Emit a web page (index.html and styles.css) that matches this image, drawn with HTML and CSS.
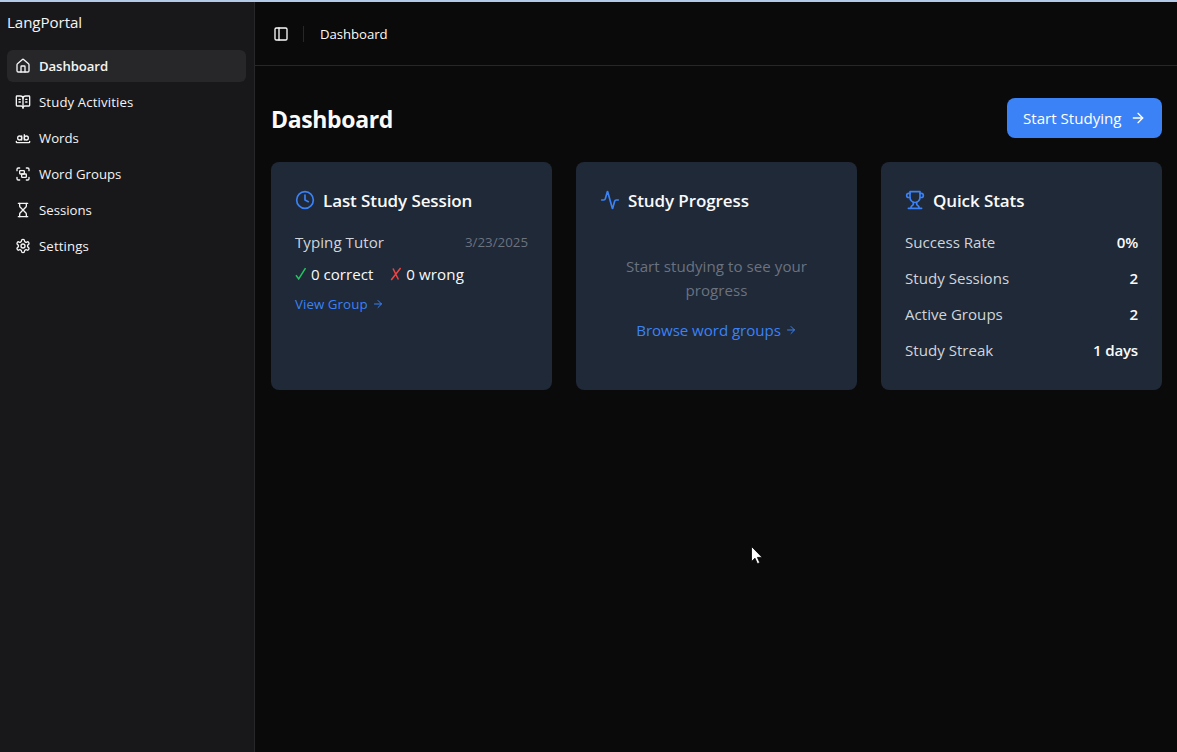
FILE: index.html
```html
<!DOCTYPE html>
<html lang="en">
<head>
<meta charset="utf-8">
<title>LangPortal</title>
<link rel="stylesheet" href="styles.css">
</head>
<body>
<div class="app">
  <aside class="sidebar">
    <div class="brand"><span class="t-brand">LangPortal</span></div>
    <nav class="nav">
      <a class="nav-item active"><svg class="icon" viewBox="0 0 24 24"><path d="M15 21v-8a1 1 0 0 0-1-1h-4a1 1 0 0 0-1 1v8"/><path d="M3 10a2 2 0 0 1 .709-1.528l7-5.999a2 2 0 0 1 2.582 0l7 5.999A2 2 0 0 1 21 10v9a2 2 0 0 1-2 2H5a2 2 0 0 1-2-2z"/></svg><span class="t-dash">Dashboard</span></a>
      <a class="nav-item"><svg class="icon" viewBox="0 0 24 24"><path d="M12 7v14"/><path d="M16 12h2"/><path d="M16 8h2"/><path d="M3 18a1 1 0 0 1-1-1V4a1 1 0 0 1 1-1h5a4 4 0 0 1 4 4 4 4 0 0 1 4-4h5a1 1 0 0 1 1 1v13a1 1 0 0 1-1 1h-6a3 3 0 0 0-3 3 3 3 0 0 0-3-3z"/><path d="M6 12h2"/><path d="M6 8h2"/></svg><span class="t-act">Study Activities</span></a>
      <a class="nav-item"><svg class="icon" viewBox="0 0 24 24"><circle cx="7" cy="12" r="3"/><path d="M10 9v6"/><circle cx="17" cy="12" r="3"/><path d="M14 7v8"/><path d="M22 17v1c0 .5-.5 1-1 1H3c-.5 0-1-.5-1-1v-1"/></svg><span class="t-words">Words</span></a>
      <a class="nav-item"><svg class="icon" viewBox="0 0 24 24"><path d="M3 7V5c0-1.100.9-2 2-2h2"/><path d="M17 3h2c1.100 0 2 .9 2 2v2"/><path d="M21 17v2c0 1.100-.9 2-2 2h-2"/><path d="M7 21H5c-1.100 0-2-.9-2-2v-2"/><rect width="7" height="5" x="7" y="7" rx="1"/><rect width="7" height="5" x="10" y="12" rx="1"/></svg><span class="t-groups">Word Groups</span></a>
      <a class="nav-item"><svg class="icon" viewBox="0 0 24 24"><path d="M5 22h14"/><path d="M5 2h14"/><path d="M17 22v-4.172a2 2 0 0 0-.586-1.414L12 12l-4.414 4.414A2 2 0 0 0 7 17.828V22"/><path d="M7 2v4.172a2 2 0 0 0 .586 1.414L12 12l4.414-4.414A2 2 0 0 0 17 6.172V2"/></svg><span class="t-sess">Sessions</span></a>
      <a class="nav-item"><svg class="icon" viewBox="0 0 24 24"><path d="M12.220 2h-.44a2 2 0 0 0-2 2v.18a2 2 0 0 1-1 1.730l-.43.25a2 2 0 0 1-2 0l-.15-.08a2 2 0 0 0-2.730.73l-.22.38a2 2 0 0 0 .73 2.730l.15.1a2 2 0 0 1 1 1.720v.51a2 2 0 0 1-1 1.740l-.15.09a2 2 0 0 0-.73 2.730l.22.38a2 2 0 0 0 2.730.73l.15-.08a2 2 0 0 1 2 0l.43.25a2 2 0 0 1 1 1.730V20a2 2 0 0 0 2 2h.44a2 2 0 0 0 2-2v-.18a2 2 0 0 1 1-1.730l.43-.25a2 2 0 0 1 2 0l.15.08a2 2 0 0 0 2.730-.73l.22-.39a2 2 0 0 0-.73-2.730l-.15-.08a2 2 0 0 1-1-1.740v-.5a2 2 0 0 1 1-1.740l.15-.09a2 2 0 0 0 .73-2.730l-.22-.38a2 2 0 0 0-2.730-.73l-.15.08a2 2 0 0 1-2 0l-.43-.25a2 2 0 0 1-1-1.730V4a2 2 0 0 0-2-2z"/><circle cx="12" cy="12" r="3"/></svg><span class="t-set">Settings</span></a>
    </nav>
  </aside>
  <div class="content">
    <header class="topbar">
      <svg class="icon" viewBox="0 0 24 24"><rect width="18" height="18" x="3" y="3" rx="2"/><path d="M9 3v18"/></svg>
      <span class="divider"></span>
      <span class="crumb">Dashboard</span>
    </header>
    <main class="main">
      <div class="heading">
        <h1>Dashboard</h1>
        <a class="button"><span class="t-start">Start Studying</span><svg class="icon" viewBox="0 0 24 24"><path d="M5 12h14"/><path d="m12 5 7 7-7 7"/></svg></a>
      </div>
      <div class="cards">
        <section class="card">
          <h2><svg class="icon" viewBox="0 0 24 24"><circle cx="12" cy="12" r="10"/><path d="M12 6v6l4 2"/></svg><span class="t-last">Last Study Session</span></h2>
          <div class="row"><span class="label t-typing">Typing Tutor</span><span class="date">3/23/2025</span></div>
          <div class="results">
            <span class="result"><svg class="mark good" viewBox="0 0 12 16"><path d="M1 9.200 3.700 13 10.500 2.200"/></svg><span class="t-correct">0 correct</span></span>
            <span class="result"><svg class="mark bad" viewBox="0 0 12 16"><path d="M3 2.500 8.400 13.500M10.600 2 1.200 14"/></svg><span class="t-wrong">0 wrong</span></span>
          </div>
          <a class="link small"><span class="t-view">View Group</span><svg class="icon" viewBox="0 0 24 24"><path d="M5 12h14"/><path d="m12 5 7 7-7 7"/></svg></a>
        </section>
        <section class="card">
          <h2><svg class="icon" viewBox="0 0 24 24"><path d="M22 12h-2.480a2 2 0 0 0-1.930 1.460l-2.350 8.360a.25.25 0 0 1-.48 0L9.240 2.180a.25.25 0 0 0-.48 0l-2.350 8.360A2 2 0 0 1 4.490 12H2"/></svg><span class="t-prog">Study Progress</span></h2>
          <div class="empty">
            <p>Start studying to see your<br>progress</p>
            <a class="link"><span class="t-browse">Browse word groups</span><svg class="icon" viewBox="0 0 24 24"><path d="M5 12h14"/><path d="m12 5 7 7-7 7"/></svg></a>
          </div>
        </section>
        <section class="card">
          <h2><svg class="icon" viewBox="0 0 24 24"><path d="M6 9H4.500a2.500 2.500 0 0 1 0-5H6"/><path d="M18 9h1.500a2.500 2.500 0 0 0 0-5H18"/><path d="M4 22h16"/><path d="M10 14.660V17c0 .55-.47.98-.97 1.210C7.850 18.750 7 20.240 7 22"/><path d="M14 14.660V17c0 .55.47.98.97 1.210C16.150 18.750 17 20.240 17 22"/><path d="M18 2H6v7a6 6 0 0 0 12 0V2Z"/></svg><span class="t-quick">Quick Stats</span></h2>
          <div class="stats">
            <div class="row"><span class="label">Success Rate</span><b>0%</b></div>
            <div class="row"><span class="label">Study Sessions</span><b>2</b></div>
            <div class="row"><span class="label">Active Groups</span><b>2</b></div>
            <div class="row"><span class="label">Study Streak</span><b>1 days</b></div>
          </div>
        </section>
      </div>
    </main>
  </div>
</div>
<svg class="cursor" viewBox="0 0 12 19"><path d="M.5.5v15l3.500-3.300 2.400 5.500 2.400-1-2.400-5.300h4.800z"/></svg>
</body>
</html>
```

FILE: styles.css
```css
* { box-sizing: border-box; }
body {
  margin: 0;
  height: 752px;
  overflow: hidden;
  background: #0a0a0a;
  color: #fafafa;
  font: 15.1px/24px "Open Sans", "Noto Sans", sans-serif;
}
h1, h2, p { margin: 0; }
span, b { white-space: nowrap; }
.app { display: flex; height: 752px; border-top: 2px solid #b4cbe8; }
.icon {
  width: 16px; height: 16px; flex: none;
  fill: none; stroke: currentColor; stroke-width: 2;
  stroke-linecap: round; stroke-linejoin: round;
}
.sidebar { width: 255px; flex: none; background: #18181b; border-right: 1px solid #27272a; color: #f4f4f5; }
.brand { padding: 8px 7px; height: 40px; letter-spacing: -.05px; }
.nav { display: flex; flex-direction: column; gap: 4px; padding: 8px 8px 8px 7px; }
.nav-item {
  display: flex; align-items: center; gap: 8px; height: 32px; padding: 0 8px;
  border-radius: 6px; font-size: 13.2px; line-height: 20px;
}
.active { background: #27272a; font-weight: 600; letter-spacing: -.1px; }
.t-act { letter-spacing: .12px; }
.t-set { letter-spacing: .12px; }
.content { flex: 1; min-width: 0; }
.topbar {
  display: flex; align-items: center; height: 64px; padding-left: 18px;
  border-bottom: 1px solid #27272a; font-size: 13.2px; letter-spacing: -.06px;
}
.divider { width: 1px; height: 16px; margin: 0 16px 0 14px; background: #27272a; }
.main { padding: 32px 15px 0 16px; }
.heading { display: flex; justify-content: space-between; align-items: center; height: 40px; margin-bottom: 24px; }
h1 { font-size: 23px; line-height: 32px; font-weight: 700; padding-top: 2px; letter-spacing: -.35px; }
.button {
  display: flex; align-items: center; justify-content: space-between; width: 155px; height: 40px;
  padding: 0 16px; border-radius: 8px; background: #3b82f6; color: #fff;
}
.cards { display: grid; grid-template-columns: repeat(3, 1fr); gap: 24px; }
.card { height: 228px; padding: 24px; border-radius: 8px; background: #1f2937; }
h2 { display: flex; align-items: center; gap: 8px; margin-bottom: 16px; font-size: 17px; line-height: 28px; font-weight: 600; letter-spacing: -.1px; }
h2 span { padding-top: 1px; line-height: 27px; }
h2 .icon { width: 20px; height: 20px; color: #3b82f6; }
.row { display: flex; justify-content: space-between; height: 24px; }
.label { color: #d1d5db; }
.t-typing { letter-spacing: .04px; }
.date { color: #6b7280; font-size: 13.3px; }
.results { display: flex; gap: 17px; margin: 8px 0; height: 24px; }
.result { display: flex; align-items: center; gap: 4px; }
.t-wrong { letter-spacing: .1px; }
.mark { width: 12px; height: 16px; fill: none; stroke-width: 1.5; }
.good { stroke: #22c55e; }
.bad { stroke: #ef4444; }
.link { display: flex; align-items: center; gap: 4px; color: #3b82f6; }
.link .icon { width: 12px; height: 12px; }
.small { font-size: 13.3px; line-height: 20px; }
.t-view { letter-spacing: .07px; }
.empty { padding: 24px 0; color: #6b7280; text-align: center; }
.empty p { letter-spacing: .05px; }
.empty .link { justify-content: center; margin-top: 16px; letter-spacing: -.05px; }
.stats { display: flex; flex-direction: column; gap: 12px; }
b { font-weight: 600; letter-spacing: -.2px; }
.cursor { position: absolute; left: 751px; top: 546px; width: 12px; height: 19px; fill: #fff; stroke: #000; stroke-width: .8; }
```
